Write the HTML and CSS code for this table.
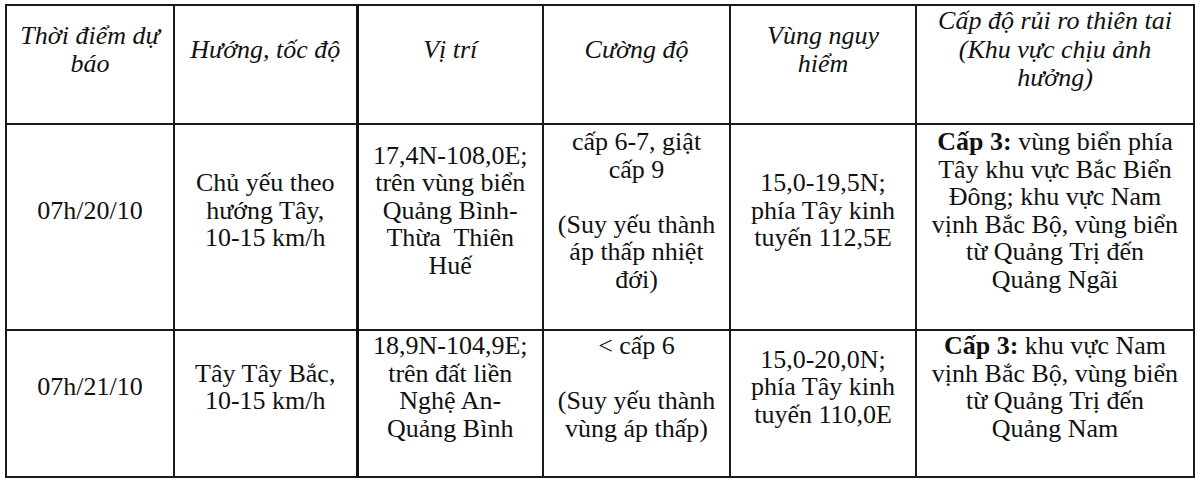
FILE: index.html
```html
<!DOCTYPE html>
<html lang="vi">
<head>
<meta charset="utf-8">
<title>Bảng dự báo</title>
<link rel="stylesheet" href="styles.css">
</head>
<body>
<table class="forecast">
  <colgroup>
    <col class="c1"><col class="c2"><col class="c3"><col class="c4"><col class="c5"><col class="c6">
  </colgroup>
  <thead>
    <tr class="head">
      <th>Thời điểm dự<br>báo</th>
      <th>Hướng, tốc độ</th>
      <th class="thick">Vị trí</th>
      <th class="mid">Cường độ</th>
      <th>Vùng nguy<br>hiểm</th>
      <th>Cấp độ rủi ro thiên tai<br>(Khu vực chịu ảnh<br>hưởng)</th>
    </tr>
  </thead>
  <tbody>
    <tr class="r1">
      <td>07h/20/10</td>
      <td>Chủ yếu theo<br>hướng Tây,<br>10-15 km/h</td>
      <td class="thick">17,4N-108,0E;<br>trên vùng biển<br>Quảng Bình-<br>Thừa&nbsp; Thiên<br>Huế</td>
      <td class="mid">cấp 6-7, giật<br>cấp 9<br><br>(Suy yếu thành<br>áp thấp nhiệt<br>đới)</td>
      <td>15,0-19,5N;<br>phía Tây kinh<br>tuyến 112,5E</td>
      <td><b>Cấp 3:</b> vùng biển phía<br>Tây khu vực Bắc Biển<br>Đông; khu vực Nam<br>vịnh Bắc Bộ, vùng biển<br>từ Quảng Trị đến<br>Quảng Ngãi</td>
    </tr>
    <tr class="r2">
      <td>07h/21/10</td>
      <td>Tây Tây Bắc,<br>10-15 km/h</td>
      <td class="thick">18,9N-104,9E;<br>trên đất liền<br>Nghệ An-<br>Quảng Bình</td>
      <td class="mid">&lt; cấp 6<br><br>(Suy yếu thành<br>vùng áp thấp)</td>
      <td>15,0-20,0N;<br>phía Tây kinh<br>tuyến 110,0E</td>
      <td><b>Cấp 3:</b> khu vực Nam<br>vịnh Bắc Bộ, vùng biển<br>từ Quảng Trị đến<br>Quảng Nam</td>
    </tr>
  </tbody>
</table>
</body>
</html>
```
FILE: styles.css
```css
html, body {
  margin: 0;
  padding: 0;
  background: #ffffff;
}

body {
  padding: 4px 0 0 5px;
  font-family: "Liberation Serif", "Times New Roman", serif;
  color: #111111;
}

.forecast {
  border-collapse: collapse;
  table-layout: fixed;
  width: 1190px;
  border: 2px solid #1a1a1a;
}

.c1 { width: 168px; }
.c2 { width: 183px; }
.c3 { width: 186px; }
.c4 { width: 187px; }
.c5 { width: 186px; }
.c6 { width: 278px; }

.forecast th,
.forecast td {
  border: 2px solid #1a1a1a;
  text-align: center;
  vertical-align: middle;
  white-space: nowrap;
  padding: 0 2px 33px;
  font-size: 26px;
  line-height: 27.5px;
}

.forecast th {
  font-weight: normal;
  font-style: italic;
  line-height: 28.5px;
  padding-bottom: 29px;
}

.forecast .thick {
  border-left: 3px solid #111111;
}

.forecast b {
  font-weight: bold;
}

.head { height: 119px; }
.r1 { height: 206px; }
.r2 { height: 147px; }
```
